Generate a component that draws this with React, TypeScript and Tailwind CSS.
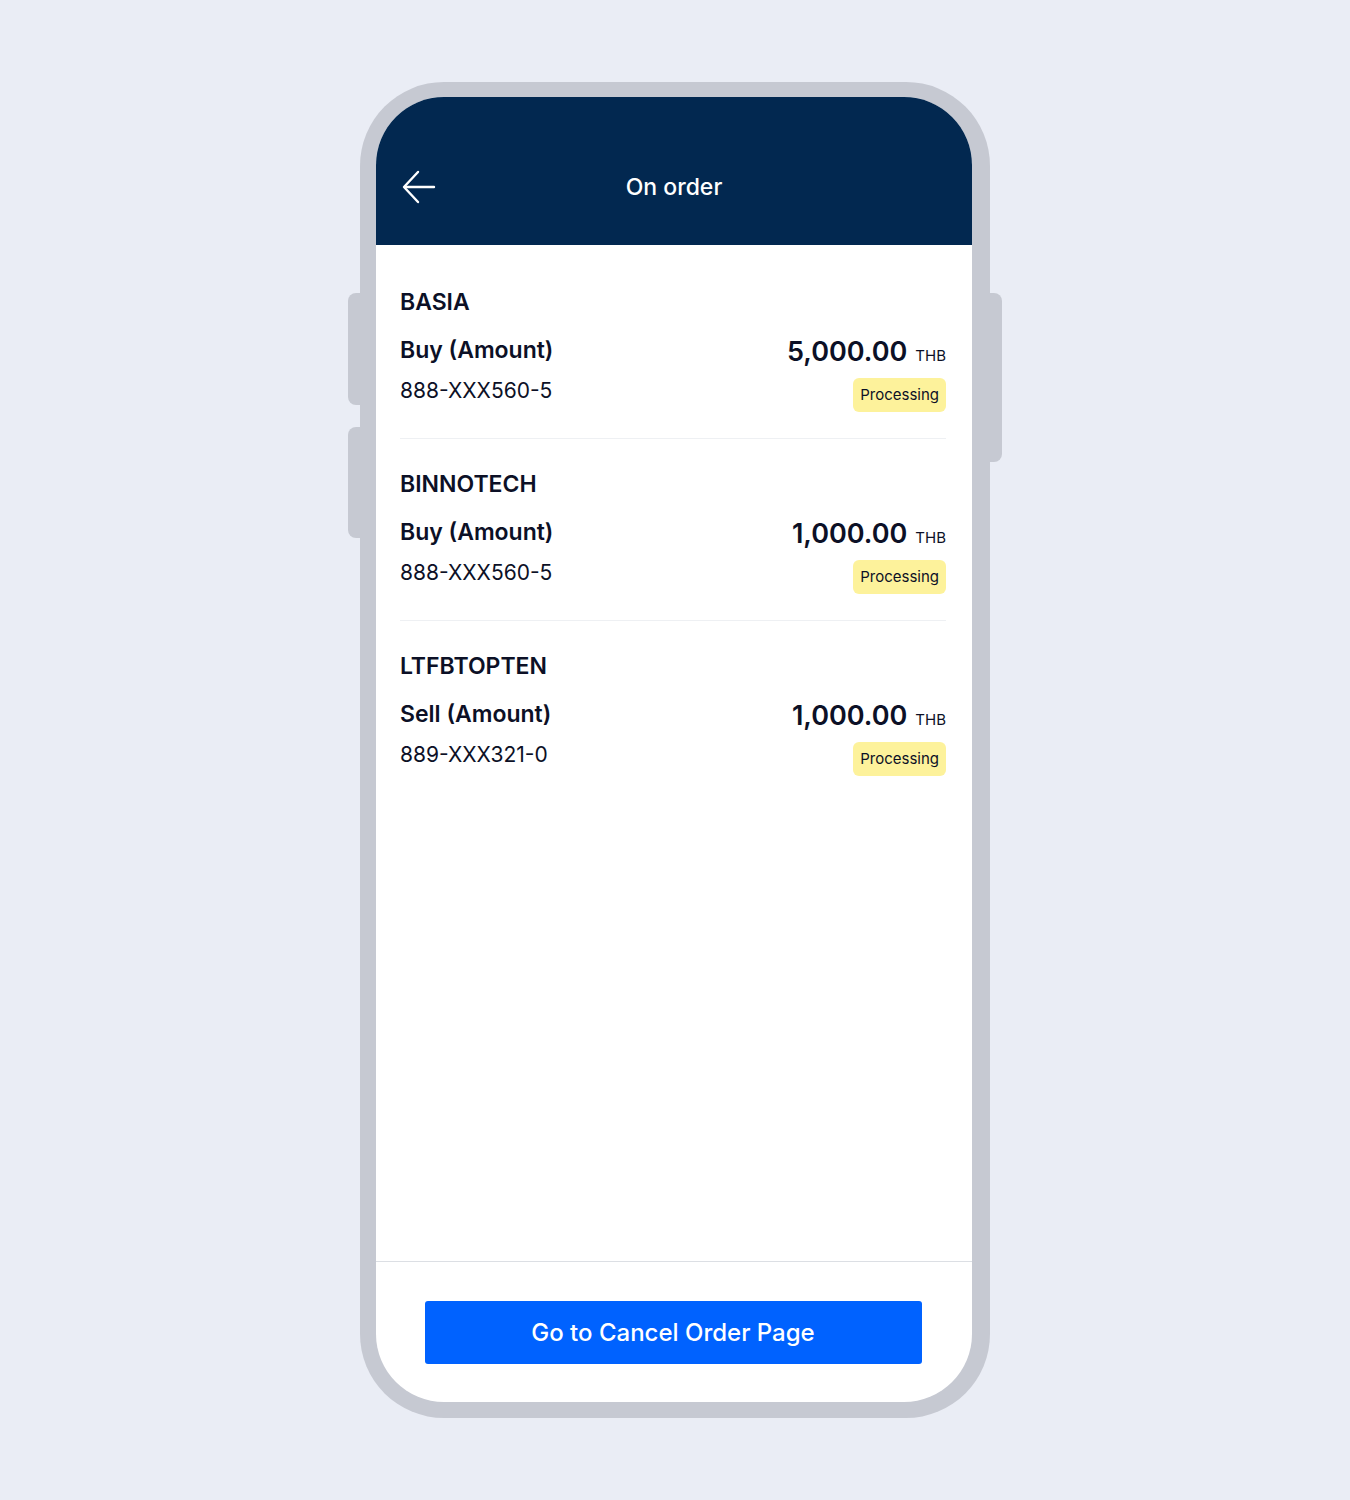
const orders = [
  { fund: "BASIA", type: "Buy (Amount)", account: "888-XXX560-5", amount: "5,000.00" },
  { fund: "BINNOTECH", type: "Buy (Amount)", account: "888-XXX560-5", amount: "1,000.00" },
  { fund: "LTFBTOPTEN", type: "Sell (Amount)", account: "889-XXX321-0", amount: "1,000.00" },
];

const BackArrow = () => (
  <svg width="34" height="34" viewBox="0 0 34 34" fill="none" stroke="white" strokeWidth="2.4" strokeLinecap="round" strokeLinejoin="round">
    <path d="M32 17H3" />
    <path d="M16 2L2 17l14 15" />
  </svg>
);

const OrderRow = ({ fund, type, account, amount, last }: { fund: string; type: string; account: string; amount: string; last?: boolean }) => (
  <div className={`flex justify-between pt-[29px] pb-[26px] ${last ? "" : "border-b border-[#eef0f3]"}`}>
    <div className="flex flex-col">
      <div className="text-[23px] leading-[32px] font-semibold text-[#0c1026]">{fund}</div>
      <div className="mt-[16px] text-[23px] leading-[32px] font-semibold text-[#0c1026]">{type}</div>
      <div className="mt-[10px] text-[21px] leading-[30px] text-[#0c1026]">{account}</div>
    </div>
    <div className="flex flex-col items-end pt-[49px]">
      <div className="flex items-baseline gap-[8px] text-[#0c1026]">
        <span className="text-[27px] leading-[34px] font-semibold">{amount}</span>
        <span className="text-[15px]">THB</span>
      </div>
      <div className="mt-[9px] h-[34px] px-[7px] rounded-[6px] bg-[#fdf29b] flex items-center text-[15px] text-[#0c1026]">
        Processing
      </div>
    </div>
  </div>
);

export default function App() {
  return (
    <div className="min-h-[1500px] w-full bg-[#eaedf5] flex justify-center pt-[82px]" style={{ fontFamily: "Inter, 'Noto Sans', sans-serif" }}>
      <div className="relative">
        {/* side buttons */}
        <div className="absolute left-[-12px] top-[211px] w-[14px] h-[112px] rounded-l-[8px] bg-[#c6c9d2]" />
        <div className="absolute left-[-12px] top-[345px] w-[14px] h-[111px] rounded-l-[8px] bg-[#c6c9d2]" />
        <div className="absolute right-[-12px] top-[211px] w-[14px] h-[169px] rounded-r-[8px] bg-[#c6c9d2]" />

        <div className="relative w-[630px] h-[1336px] rounded-[84px] bg-[#c6c9d2] pl-[16px] pr-[18px] pt-[15px] pb-[16px]">
          <div className="w-full h-full rounded-[68px] overflow-hidden bg-white flex flex-col">
            <div className="h-[148px] shrink-0 bg-[#022850] flex items-center px-[26px] pt-[32px]">
              <div className="w-[40px]">
                <BackArrow />
              </div>
              <div className="flex-1 text-center text-white text-[23px] font-medium pr-[40px]">On order</div>
            </div>

            <div className="flex-1 pt-[12px] pl-[24px] pr-[26px]">
              {orders.map((o, i) => (
                <OrderRow key={o.fund} {...o} last={i === orders.length - 1} />
              ))}
            </div>

            <div className="h-[141px] shrink-0 border-t border-[#dcdfe4] flex justify-center pt-[39px] pr-[2px]">
              <button className="w-[497px] h-[63px] rounded-[3px] bg-[#0062ff] text-white text-[24px] font-medium">
                Go to Cancel Order Page
              </button>
            </div>
          </div>
        </div>
      </div>
    </div>
  );
}
